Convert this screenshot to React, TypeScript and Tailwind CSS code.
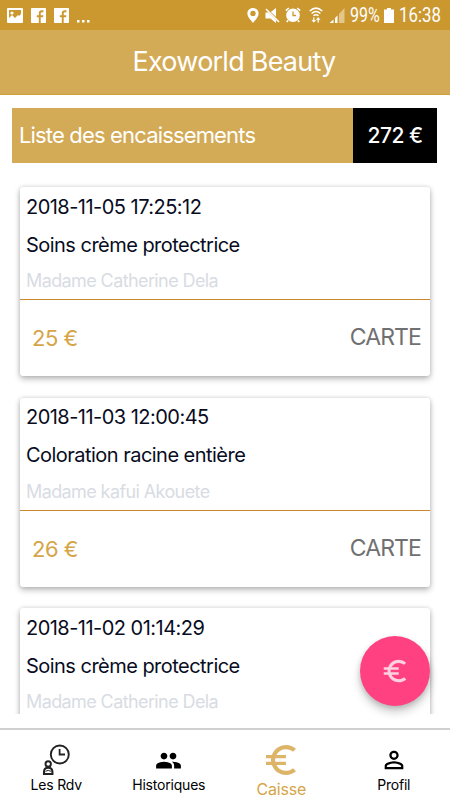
import React, { useState } from 'react';
import { MdEuroSymbol, MdPeople, MdPersonOutline } from 'react-icons/md';

interface Payment {
  id: number;
  date: string;
  service: string;
  client: string;
  amount: number;
  method: string;
}

const payments: Payment[] = [
  {
    id: 1,
    date: '2018-11-05 17:25:12',
    service: 'Soins crème protectrice',
    client: 'Madame Catherine Dela',
    amount: 25,
    method: 'CARTE',
  },
  {
    id: 2,
    date: '2018-11-03 12:00:45',
    service: 'Coloration racine entière',
    client: 'Madame kafui Akouete',
    amount: 26,
    method: 'CARTE',
  },
  {
    id: 3,
    date: '2018-11-02 01:14:29',
    service: 'Soins crème protectrice',
    client: 'Madame Catherine Dela',
    amount: 25,
    method: 'CARTE',
  },
];

const FacebookIcon: React.FC = () => (
  <svg viewBox="0 0 15 15" className="w-[15px] h-[15px]">
    <rect width="15" height="15" rx="0.8" fill="#fff" />
    <path d="M7.8 15V9.2H5.8V7.2H7.8V5.4C7.8 3.3 9 2.3 10.8 2.3H12.4V4.2H11.2C10.2 4.2 9.7 4.7 9.7 5.5V7.2H12.4L12.1 9.2H9.7V15Z" fill="#cb982f" />
  </svg>
);

const StatusBar: React.FC = () => (
  <div className="flex h-[30px] shrink-0 items-center bg-[#cb982f] text-white">
    <div className="flex items-center gap-2 pl-[7px]">
      <svg viewBox="0 0 16 15" className="w-4 h-[15px]">
        <path d="M1 0H15Q16 0 16 1V14Q16 15 15 15H1Q0 15 0 14V1Q0 0 1 0ZM2 2V10L5 7L8 10L11 7L12 8L14 6V2Z" fill="#fff" fillRule="evenodd" />
        <circle cx="5" cy="5" r="1.6" fill="#fff" />
      </svg>
      <FacebookIcon />
      <FacebookIcon />
      <svg viewBox="0 0 14 15" className="w-3.5 h-[15px]">
        <path d="M0 12H2.5V14.5H0ZM5 12H7.5V14.5H5ZM10 12H12.5V14.5H10Z" fill="#fff" />
      </svg>
    </div>

    <div className="ml-auto flex items-center pr-[9px]">
      {/* Location */}
      <svg viewBox="0 0 12 15" className="w-3 h-[15px] mr-[6px]">
        <path d="M6 0C9.3 0 11.6 2.4 11.6 5.5C11.6 9 8.5 11.6 6 15C3.5 11.6 0.4 9 0.4 5.5C0.4 2.4 2.7 0 6 0ZM6 2.7A2.7 2.7 0 1 0 6 8.1A2.7 2.7 0 1 0 6 2.7Z" fill="#fff" fillRule="evenodd" />
      </svg>
      {/* Muted */}
      <svg viewBox="0 0 15 15" className="w-[15px] h-[15px] mr-[5px]">
        <path d="M0.5 4.5H3.5L11 12V15L5.5 10.5H0.5ZM5.8 4L11 0V8.8Z" fill="#fff" />
        <path d="M1 1L14 14" stroke="#fff" strokeWidth="1.5" />
      </svg>
      {/* Alarm */}
      <svg viewBox="0 0 16 16" className="w-4 h-4 mr-2">
        <circle cx="8" cy="8.3" r="6.8" fill="#fff" />
        <path d="M0.8 3.6L3.8 1M15.2 3.6L12.2 1M3.2 13.2L1.7 15M12.8 13.2L14.3 15" stroke="#fff" strokeWidth="1.6" />
        <path d="M8 4.6V8.5H11" fill="none" stroke="#cb982f" strokeWidth="1.3" />
      </svg>
      {/* Wifi */}
      <svg viewBox="0 0 14 16" className="w-3.5 h-4 mr-1.5">
        <g fill="none" stroke="#fff" strokeWidth="1.5">
          <path d="M0.7 4Q7 -1.8 13.3 4" />
          <path d="M2.6 6.5Q7 2.5 11.4 6.5" />
          <path d="M4.5 8.8Q7 6.6 9.5 8.8" />
          <path d="M4.8 10.5V14.5M9.2 15.5V11" strokeWidth="1.3" />
        </g>
        <path d="M2.5 13H7.1L4.8 15.7ZM6.9 12.7L9.2 10L11.5 12.7Z" fill="#fff" />
      </svg>
      {/* Signal */}
      <svg viewBox="0 0 16 15" className="w-4 h-[15px] mr-[5px]">
        <path d="M0.5 15L4.5 11.5V15ZM6 10L8.5 7.5V15H6Z" fill="#fff" />
        <path d="M10 6L15.5 0V15H10Z" fill="#fff" fillOpacity="0.45" />
      </svg>
      <span className="inline-block w-[30px] font-[Roboto,sans-serif] text-xl leading-[30px]">
        <span className="inline-block origin-left scale-x-[0.8]">99%</span>
      </span>
      <svg viewBox="0 0 10 15" className="w-2.5 h-[15px] ml-1 mr-[5px]">
        <path d="M3 0H7V1.5H10V15H0V1.5H3Z" fill="#fff" />
      </svg>
      <span className="inline-block w-[42px] font-[Roboto,sans-serif] text-xl leading-[30px]">
        <span className="inline-block origin-left scale-x-[0.84]">16:38</span>
      </span>
    </div>
  </div>
);

const PaymentCard: React.FC<{ payment: Payment }> = ({ payment }) => (
  <div className="h-[189px] shrink-0 rounded-[3px] bg-white shadow-[0_3px_6px_rgba(0,0,0,0.26),0_0_4px_rgba(0,0,0,0.14)]">
    <div className="h-[113px] border-b border-[#c8882b] px-1.5 text-xl text-[#080c22]">
      <p className="flex h-[39px] items-center whitespace-nowrap tracking-[-0.53px]">{payment.date}</p>
      <p className="flex h-[37px] items-center whitespace-nowrap tracking-[-0.53px]">{payment.service}</p>
      <p className="flex h-9 items-center whitespace-nowrap text-lg tracking-[-0.6px] text-[#d8dce3]">
        {payment.client}
      </p>
    </div>
    <div className="flex h-[75px] items-center justify-between pl-3 pr-[9px]">
      <span className="pt-0.5 text-[22px] tracking-[-0.5px] text-[#d5a548]">{payment.amount} €</span>
      <span className="text-[23px] tracking-[-0.9px] text-[#707070]">{payment.method}</span>
    </div>
  </div>
);

const RdvIcon: React.FC = () => (
  <svg viewBox="0 0 28 32" className="w-7 h-8" fill="none" stroke="#222">
    <circle cx="17.8" cy="10.5" r="9" strokeWidth="1.9" />
    <path d="M17.6 5V10.5H23" strokeWidth="1.8" />
    <circle cx="6.2" cy="20" r="2.7" strokeWidth="1.9" />
    <path d="M2 30V28Q2 23.8 6.2 23.8Q10.4 23.8 10.4 28V30Z" strokeWidth="2.1" />
    <path d="M3.5 27.3Q6.2 25.5 9 27.3" strokeWidth="1" />
  </svg>
);

const App: React.FC = () => {
  const [activeTab, setActiveTab] = useState('Caisse');

  const tabs = [
    { label: 'Les Rdv', icon: <RdvIcon /> },
    { label: 'Historiques', icon: <MdPeople className="w-[27px] h-[27px]" /> },
    { label: 'Caisse', icon: <MdEuroSymbol className="w-10 h-10 text-[#ddb569]" /> },
    { label: 'Profil', icon: <MdPersonOutline className="w-7 h-7" /> },
  ];

  return (
    <div className="flex h-[800px] w-[450px] flex-col overflow-hidden bg-white font-[Inter,sans-serif]">
      <StatusBar />

      <header className="flex h-[65px] shrink-0 items-center justify-center border-b border-[#cda03b] bg-[#d3aa55] pl-[18px]">
        <h1 className="text-[27px] tracking-[-0.77px] text-white">Exoworld Beauty</h1>
      </header>

      {/* Total */}
      <div className="ml-3 mr-[13px] mt-[13px] flex h-[55px] shrink-0 text-white">
        <div className="flex flex-1 items-center bg-[#d3aa55] pl-[7px] text-[22px] tracking-[-0.84px]">
          Liste des encaissements
        </div>
        <div className="flex w-[84px] items-center justify-center bg-black text-[21px] font-medium tracking-[-0.5px]">
          272 €
        </div>
      </div>

      {/* Payments */}
      <div className="relative h-[551px] shrink-0">
        <div className="flex h-full flex-col gap-[21.5px] overflow-hidden px-5 pt-6">
          {payments.map((payment) => (
            <PaymentCard key={payment.id} payment={payment} />
          ))}
        </div>
        <button className="absolute bottom-2 right-5 flex h-[70px] w-[70px] items-center justify-center rounded-full bg-[#ff4081] text-[#ffd0e0] shadow-[0_6px_10px_rgba(0,0,0,0.2),0_2px_5px_rgba(0,0,0,0.14)]">
          <MdEuroSymbol className="w-[30px] h-[30px]" />
        </button>
      </div>

      <nav className="mt-[14px] flex h-[72px] shrink-0 border-t-2 border-[#d0d0d0] bg-white text-black">
        {tabs.map((tab) => (
          <button
            key={tab.label}
            onClick={() => setActiveTab(tab.label)}
            className="flex flex-1 flex-col items-center justify-start pt-2.5"
          >
            <span className="flex h-10 items-center justify-center">{tab.icon}</span>
            <span
              className={`whitespace-nowrap tracking-[-0.2px] ${
                activeTab === tab.label
                  ? 'mt-[-1px] text-[16px] leading-5 text-[#d5a548]'
                  : 'mt-[-5px] text-[14px] leading-5'
              }`}
            >
              {tab.label}
            </span>
          </button>
        ))}
      </nav>
    </div>
  );
};

export default App;
